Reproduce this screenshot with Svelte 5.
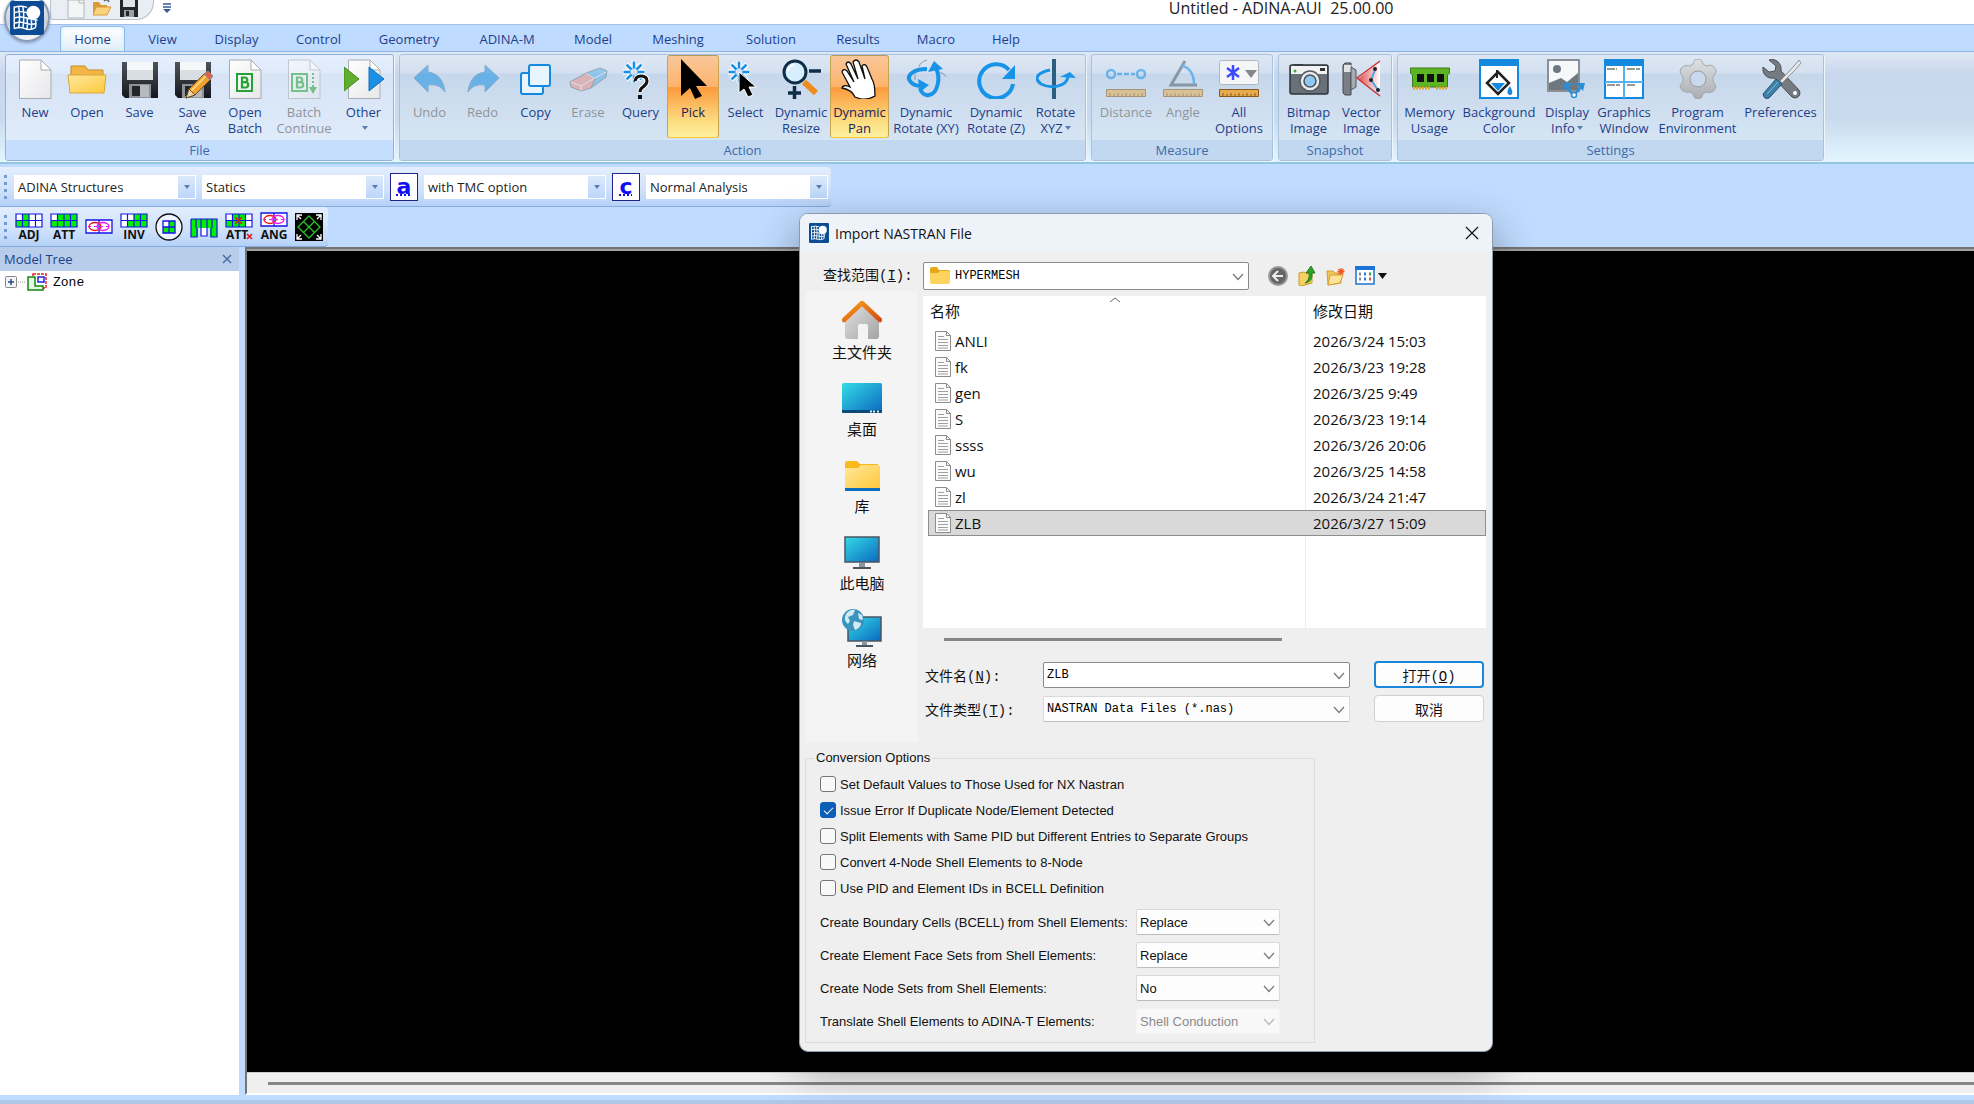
<script>
  const tabs = [
    { name: 'Home', w: 65 },
    { name: 'View', w: 59 },
    { name: 'Display', w: 73 },
    { name: 'Control', w: 75 },
    { name: 'Geometry', w: 90 },
    { name: 'ADINA-M', w: 90 },
    { name: 'Model', w: 66 },
    { name: 'Meshing', w: 88 },
    { name: 'Solution', w: 82 },
    { name: 'Results', w: 76 },
    { name: 'Macro', w: 64 },
    { name: 'Help', w: 60 }
  ];

  const groups = [
    {
      title: 'File',
      hot: true,
      items: [
        { icon: 'new', lines: ['New'], w: 52 },
        { icon: 'open', lines: ['Open'], w: 52 },
        { icon: 'save', lines: ['Save'], w: 53 },
        { icon: 'saveas', lines: ['Save', 'As'], w: 53 },
        { icon: 'openbatch', lines: ['Open', 'Batch'], w: 52 },
        { icon: 'batch', lines: ['Batch', 'Continue'], w: 66, disabled: true },
        { icon: 'other', lines: ['Other', ''], w: 53, menu: true }
      ]
    },
    {
      title: 'Action',
      items: [
        { icon: 'undo', lines: ['Undo'], w: 53, disabled: true },
        { icon: 'redo', lines: ['Redo'], w: 53, disabled: true },
        { icon: 'copy', lines: ['Copy'], w: 53 },
        { icon: 'erase', lines: ['Erase'], w: 52, disabled: true },
        { icon: 'query', lines: ['Query'], w: 53 },
        { icon: 'pick', lines: ['Pick'], w: 52, on: true },
        { icon: 'select', lines: ['Select'], w: 53 },
        { icon: 'resize', lines: ['Dynamic', 'Resize'], w: 58 },
        { icon: 'pan', lines: ['Dynamic', 'Pan'], w: 59, on: true },
        { icon: 'rotxy', lines: ['Dynamic', 'Rotate (XY)'], w: 74 },
        { icon: 'rotz', lines: ['Dynamic', 'Rotate (Z)'], w: 66 },
        { icon: 'rotxyz', lines: ['Rotate', 'XYZ'], w: 53, menu: true }
      ]
    },
    {
      title: 'Measure',
      items: [
        { icon: 'distance', lines: ['Distance'], w: 62, disabled: true },
        { icon: 'angle', lines: ['Angle'], w: 52, disabled: true },
        { icon: 'options', lines: ['All', 'Options'], w: 60 }
      ]
    },
    {
      title: 'Snapshot',
      items: [
        { icon: 'bitmap', lines: ['Bitmap', 'Image'], w: 53 },
        { icon: 'vector', lines: ['Vector', 'Image'], w: 53 }
      ]
    },
    {
      title: 'Settings',
      items: [
        { icon: 'memory', lines: ['Memory', 'Usage'], w: 57 },
        { icon: 'background', lines: ['Background', 'Color'], w: 82 },
        { icon: 'display', lines: ['Display', 'Info'], w: 54, menu: true },
        { icon: 'graphics', lines: ['Graphics', 'Window'], w: 60 },
        { icon: 'program', lines: ['Program', 'Environment'], w: 87 },
        { icon: 'prefs', lines: ['Preferences'], w: 79 }
      ]
    }
  ];

  const modules = [
    { value: 'ADINA Structures', label: 'Module' },
    { value: 'Statics', label: 'Analysis type', letter: 'a' },
    { value: 'with TMC option', label: 'Coupling', letter: 'c' },
    { value: 'Normal Analysis', label: 'Analysis mode' }
  ];

  const tools = ['ADJ', 'ATT', 'eye', 'INV', 'circle', 'comb', 'ATTx', 'ANG', 'fit'];

  const places = [
    { id: 'home', name: '主文件夹' },
    { id: 'desktop', name: '桌面' },
    { id: 'library', name: '库' },
    { id: 'pc', name: '此电脑' },
    { id: 'network', name: '网络' }
  ];

  const files = [
    { name: 'ANLI', date: '2026/3/24 15:03' },
    { name: 'fk', date: '2026/3/23 19:28' },
    { name: 'gen', date: '2026/3/25 9:49' },
    { name: 'S', date: '2026/3/23 19:14' },
    { name: 'ssss', date: '2026/3/26 20:06' },
    { name: 'wu', date: '2026/3/25 14:58' },
    { name: 'zl', date: '2026/3/24 21:47' },
    { name: 'ZLB', date: '2026/3/27 15:09' }
  ];

  let selected = $state('ZLB');

  let checks = $state([
    { label: 'Set Default Values to Those Used for NX Nastran', on: false },
    { label: 'Issue Error If Duplicate Node/Element Detected', on: true },
    { label: 'Split Elements with Same PID but Different Entries to Separate Groups', on: false },
    { label: 'Convert 4-Node Shell Elements to 8-Node', on: false },
    { label: 'Use PID and Element IDs in BCELL Definition', on: false }
  ]);

  const choices = [
    { label: 'Create Boundary Cells (BCELL) from Shell Elements:', value: 'Replace' },
    { label: 'Create Element Face Sets from Shell Elements:', value: 'Replace' },
    { label: 'Create Node Sets from Shell Elements:', value: 'No' },
    { label: 'Translate Shell Elements to ADINA-T Elements:', value: 'Shell Conduction', disabled: true }
  ];

  const rays = [0, 45, 90, 135, 180, 225, 270, 315];
</script>

{#snippet logo()}
  <rect width="32" height="32" rx="2" fill="#0c4c94" />
  <path d="M4 6Q10 4 16 6M4 11Q10 9 16 11M4 16Q10 14 16 16T26 18M4 21Q10 19 15 21T25 21M4 26Q9 24 14 26T24 25M4 5v21M8 5q2 10 0 21M12 5q2 10 0 21M16 16q1 6 0 10M20 18q1 4 0 8M24 18q1 4 0 7" fill="none" stroke="#fff" stroke-width="1.4" />
  <circle cx="22" cy="11" r="6.5" fill="#fff" />
{/snippet}

{#snippet page()}
  <path d="M4.5 1h21.500l10 10v28.500h-31.500z" fill="url(#paper)" stroke="#a9abb0" />
  <path d="M26 1v10h10z" fill="#fff" stroke="#a9abb0" />
{/snippet}

{#snippet floppy()}
  <path d="M2 3h36v36H5l-3-3z" fill="url(#disk)" />
  <path d="M7 3h26v18H7z" fill="#d8dee2" />
  <path d="M7 3h26v8H7z" fill="#f5f7f8" />
  <path d="M9 25h22v14H9z" fill="#8d9298" />
  <path d="M12 27h8v10h-8z" fill="#23262d" />
  <path d="M20 26h9v12h-9z" fill="#b5babe" />
{/snippet}

{#snippet folder()}
  <path d="M4 7h14l3 4h15v10H4z" fill="#f2b546" stroke="#c98a22" />
  <path d="M1 16h38l-2 18H3z" fill="url(#gold)" stroke="#dba536" />
{/snippet}

{#snippet burst()}
  {#each rays as r}
    <path d="M13 9V2" transform="rotate({r} 13 13)" stroke="#fff" stroke-width="5" />
  {/each}
  {#each rays as r}
    <path d="M13 9.500V2.500" transform="rotate({r} 13 13)" stroke="#1a8fe6" stroke-width="2.600" />
  {/each}
{/snippet}

{#snippet ruler()}
  <path d="M.5 30.500h39v7H.5z" fill="#e5ab4e" stroke="#8a5a1c" />
  <path d="M4 34v3M8 35v2M12 34v3M16 35v2M20 34v3M24 35v2M28 34v3M32 35v2M36 34v3" stroke="#8a5a1c" />
{/snippet}

{#snippet ribbonIcon(name)}
  <svg class="big" viewBox="0 0 40 40" fill="none" aria-hidden="true">
    {#if name === 'new'}
      {@render page()}
    {:else if name === 'open'}
      {@render folder()}
    {:else if name === 'save'}
      {@render floppy()}
    {:else if name === 'saveas'}
      {@render floppy()}
      <path d="M13 39l3-9 16-16 6 6-16 16z" fill="#f0a02c" stroke="#6d4a1a" />
      <path d="M18 32l15-15" stroke="#ffd078" stroke-width="2" />
      <path d="M13 39l3-9 6 6z" fill="#e9d3ae" stroke="#6d4a1a" />
      <path d="M31 15l4-3 5 5-3 4z" fill="#e0604a" stroke="#8a8f95" />
    {:else if name === 'openbatch' || name === 'batch'}
      {@render page()}
      <g transform={name === 'batch' ? 'translate(-4 0)' : ''} stroke="#24a334">
        <path d="M12 15h15v17H12z" stroke-width="2" />
        <path d="M17 18.500v10h3.500a2.700 2.700 0 0 0 0-5.400H17h3a2.300 2.300 0 0 0 0-4.600z" stroke-width="2.200" />
      </g>
      {#if name === 'batch'}
        <path d="M29 14v14" stroke="#24a334" stroke-width="2" stroke-dasharray="2 2" />
        <path d="M25 28h8l-4 7z" fill="#24a334" />
      {/if}
    {:else if name === 'other'}
      {@render page()}
      <path d="M0 8l15 12L0 32z" fill="#5fae2e" stroke="#3f8a1c" />
      <path d="M25 8l15 12-15 12z" fill="#1c90e6" stroke="#1470bb" />
    {:else if name === 'undo' || name === 'redo'}
      <g transform={name === 'redo' ? 'translate(40 0) scale(-1 1)' : ''}>
        <path d="M4 19L18 6v7c10 1 16 9 17 20-4-6-9-8-17-7v7z" fill="#1b93e2" stroke="#4b86b8" />
      </g>
    {:else if name === 'copy'}
      <rect x="5" y="14" width="22" height="21" rx="2" fill="#e8f5fe" stroke="#1389e0" stroke-width="2" />
      <rect x="13" y="6" width="21" height="21" rx="2" fill="#e8f5fe" stroke="#1389e0" stroke-width="2" />
    {:else if name === 'erase'}
      <path d="M18 14l14-5 7 3-1 6-15 11z" fill="#5fb4ea" stroke="#66747f" />
      <path d="M2 23l16-9 9 6-4 9-10 3-10-4z" fill="#e8948c" stroke="#66747f" />
      <path d="M3 23l10 4v5M13 27l12-7 13-7M18 14l8 5" stroke="#f7e4e0" />
    {:else if name === 'query'}
      {@render burst()}
      <path d="M14 22q1-5 6-5 6 0 6 5 0 3-4 6-3 2-3 5" stroke="#fff" stroke-width="5" />
      <path d="M14 22q1-5 6-5 6 0 6 5 0 3-4 6-3 2-3 5" stroke="#111" stroke-width="3" />
      <rect x="17" y="36" width="4" height="4" fill="#111" />
    {:else if name === 'pick'}
      <path d="M8 0v37l9-8 5 11 7-3-6-10h11z" fill="#000" />
    {:else if name === 'select'}
      {@render burst()}
      <path d="M13 13v21l5-4 4 8 5-2-4-8h7z" fill="#000" stroke="#fff" />
    {:else if name === 'resize'}
      <circle cx="14" cy="13" r="11" fill="#d7effc" stroke="#0e2e48" stroke-width="3" />
      <path d="M7 12a7 7 0 0 1 6-6" stroke="#fff" stroke-width="2" />
      <path d="M23 23l12 11" stroke="#f08c1b" stroke-width="6" />
      <path d="M28 12h12M7 34h13M13.500 27v13" stroke="#0e2e48" stroke-width="3.500" />
    {:else if name === 'pan'}
      <path d="M15 38Q12 31 2 29q1-4 8-1L2 13q1-4 5-1l7 11L6 5q2-4 5 0l7 15-5-17q3-4 6 0l6 17-3-13q3-3 5 1l5 12q3 5 3 17-7 4-14 3z" fill="#fff" stroke="#111" stroke-width="1.300" />
    {:else if name === 'rotxy'}
      <path d="M29 7c7 12 2 28-6 29-5 1-8-3-9-7" stroke="#1793e8" stroke-width="4" />
      <path d="M21 10c-13 0-21 6-17 12 2 3 6 5 11 5" stroke="#1793e8" stroke-width="4" />
      <path d="M22 13l6-11 9 8z" fill="#1793e8" />
      <path d="M12 20l11 6-9 7z" fill="#1793e8" />
      <path d="M21 1q-7 2-8 7M34 13q5 2 6 5M9 15v6" stroke="#8a99a8" />
    {:else if name === 'rotz'}
      <path d="M33 11A17 17 0 1 0 37 25" stroke="#1793e8" stroke-width="4" />
      <path d="M39 6v14H26z" fill="#1793e8" />
    {:else if name === 'rotxyz'}
      <path d="M18 0v40" stroke="#2d5e80" stroke-width="4" />
      <path d="M14 11C0 14-2 20 5 25c10 5 25 3 27-7" stroke="#1793e8" stroke-width="3" />
      <path d="M24 18l10-5 6 6z" fill="#1793e8" />
    {:else if name === 'distance'}
      <path d="M11 15h18" stroke="#1793e8" stroke-width="2.500" stroke-dasharray="5 2" />
      <circle cx="5" cy="15" r="4" stroke="#1793e8" stroke-width="2.500" />
      <circle cx="35" cy="15" r="4" stroke="#1793e8" stroke-width="2.500" />
      {@render ruler()}
    {:else if name === 'angle'}
      <path d="M22 2L8 26h26" stroke="#55606b" stroke-width="3" />
      <path d="M19 7c7 1 12 8 12 18" stroke="#1793e8" stroke-width="2.500" />
      {@render ruler()}
    {:else if name === 'options'}
      <rect x=".5" y="1.500" width="39" height="24" rx="2" fill="#f5f6f8" stroke="#b3b6bb" />
      <path d="M14 6v15M8 9l12 9M20 9L8 18" stroke="#3d4bff" stroke-width="2.500" />
      <path d="M26 11h12l-6 8z" fill="#85898f" />
      {@render ruler()}
    {:else if name === 'bitmap'}
      <path d="M5 5h9v3H5z" fill="#50555c" />
      <rect x="1" y="6" width="38" height="29" rx="2" fill="#6a7078" stroke="#2e3338" stroke-width="1.500" />
      <path d="M2 7h36v8H2z" fill="#f1f2f3" />
      <rect x="31" y="9" width="5" height="3" fill="#333" />
      <circle cx="6" cy="12" r="1.500" fill="#3bb13b" />
      <circle cx="21" cy="22" r="10" fill="#e9ebed" stroke="#565c63" stroke-width="1.500" />
      <circle cx="21" cy="22" r="6" fill="#8cc8f2" stroke="#4b5259" stroke-width="1.500" />
    {:else if name === 'vector'}
      <path d="M16 20L38 3v31z" fill="url(#beam)" />
      <path d="M38 2L15 19l23 18" stroke="#cf3536" stroke-width="1.500" />
      <path d="M33 11l-4 10 7 10" stroke="#4aa5e6" stroke-width="2" />
      <circle cx="33" cy="10" r="2" fill="#222" /><circle cx="29" cy="21" r="2" fill="#222" /><circle cx="36" cy="31" r="2" fill="#222" />
      <path d="M1 6l2-2h6v32H3l-2-2z" fill="#7a7f86" stroke="#44494f" />
      <path d="M2 6h7v7H2z" fill="#e1e3e5" />
      <path d="M9 8l5 3v17l-5 3z" fill="#a5abb0" stroke="#55595e" />
    {:else if name === 'memory'}
      <path d="M.5 9h39v5l-2 2v12h-35V16l-2-2z" fill="#5cb423" stroke="#3c7c17" />
      <path d="M7 15h7v8H7zM17 15h7v8h-7zM27 15h7v8h-7z" fill="#111" />
      <path d="M3 29h18M26 29h11" stroke="#e2a528" stroke-width="3" stroke-dasharray="2 1" />
    {:else if name === 'background'}
      <path d="M1 1h38v38H1z" fill="#fff" stroke="#1389e0" stroke-width="2" />
      <path d="M0 0h40v7H0z" fill="#1389e0" />
      <path d="M19 13l11 11-11 11L8 24z" fill="#fff" stroke="#222" stroke-width="2.500" />
      <path d="M12 24h14l-7 8z" fill="#1389e0" />
      <path d="M18 11v8" stroke="#222" stroke-width="2" />
      <path d="M31 27q-4 6-2 8t4 0q1-3-2-8z" fill="#1389e0" />
    {:else if name === 'display'}
      <path d="M1 1h31v31H1z" fill="#f7f8f9" stroke="#8b9096" stroke-width="2" />
      <circle cx="10" cy="10" r="4" fill="#6f7780" />
      <path d="M2 24l12-5 6 4 11-9v17H2z" fill="#6f7780" />
      <path d="M26 36l-7-9M27 36l8-9" stroke="#2a8fd6" stroke-width="2.500" />
      <path d="M16 24h10l-8 8zM38 24H28l8 8z" fill="#2a8fd6" />
      <circle cx="27" cy="36" r="2.500" fill="#fff" stroke="#2a8fd6" stroke-width="1.500" />
    {:else if name === 'graphics'}
      <path d="M1 1h38v38H1z" fill="#fff" stroke="#1389e0" stroke-width="2" />
      <path d="M0 0h40v7H0z" fill="#1389e0" />
      <path d="M20 7v32M1 23h38" stroke="#55b1f0" stroke-width="2" />
      <path d="M3 10h10M23 10h13M3 26h13M23 26h8" stroke="#333" stroke-dasharray="8 1" />
    {:else if name === 'program'}
      <path d="M15 5q1-5 5-5t5 5l3 2q5-2 7 0 4 4 3 6l-3 5v4l3 5q-1 5-4 6-3 1-6 0l-3 2q-1 5-5 5t-5-5l-3-2q-4 1-7-1-3-3-3-5l3-5v-4l-3-5q0-4 4-6 3-1 6 0z" fill="url(#steel)" stroke="#a4a8ac" />
      <circle cx="20" cy="20" r="8" fill="#c9d8ed" stroke="#999da2" />
    {:else if name === 'prefs'}
      <path d="M8 1c7-2 13 3 12 11l18 19c3 5-2 10-7 7L13 19C6 20 1 15 2 8l6 5 6-1 1-5z" fill="#767b81" stroke="#4a4e53" />
      <circle cx="34" cy="34" r="2" fill="#fff" />
      <path d="M19 22L33 7l5-6 2 3-5 6-14 14z" fill="#e4e6e8" stroke="#8f9398" />
      <path d="M2 35L15 20l6 5L8 39q-5 2-6-4z" fill="#3d7fa8" stroke="#25546f" />
      <path d="M6 35l11-12" stroke="#8cc0dd" />
    {/if}
  </svg>
{/snippet}

{#snippet cells(filled)}
  <path d="M1 1h26v13H1z" fill="#fff" />
  {#each filled as [x, y]}
    <rect x={1 + x * 6.5} y={1 + y * 6.5} width="6.500" height="6.500" fill="#00f000" />
  {/each}
  <path d="M1 1h26v13H1zM1 7.500h26M7.500 1v13M14 1v13M20.500 1v13" fill="none" stroke="#1414e6" stroke-width="1.200" />
{/snippet}

{#snippet eye(y)}
  <g transform="translate(0 {y})" fill="none">
    <path d="M1 1h26v13H1zM14 1v13" fill="#fff" stroke="#1414e6" stroke-width="1.300" />
    <ellipse cx="10" cy="7.500" rx="6" ry="4" stroke="#f01414" stroke-width="1.300" />
    <ellipse cx="18" cy="7.500" rx="6" ry="4" stroke="#f014f0" stroke-width="1.300" />
    <path d="M3 7.500h22" stroke="#f014f0" stroke-dasharray="3 3" />
  </g>
{/snippet}

{#snippet toolIcon(name)}
  <svg class="tool-icon" viewBox="0 0 28 28" fill="none" aria-hidden="true">
    {#if name === 'ADJ'}
      {@render cells([[0, 1], [1, 0], [1, 1]])}
      <text x="14" y="26">ADJ</text>
    {:else if name === 'ATT'}
      {@render cells([[0, 1], [1, 0], [1, 1], [2, 0], [2, 1], [3, 0], [3, 1]])}
      <text x="14" y="26">ATT</text>
    {:else if name === 'eye'}
      {@render eye(6)}
    {:else if name === 'INV'}
      {@render cells([[1, 1], [2, 0], [2, 1], [3, 0], [3, 1]])}
      <text x="14" y="26">INV</text>
    {:else if name === 'circle'}
      <circle cx="14" cy="14" r="13" fill="#eef4ff" stroke="#111" stroke-width="1.300" />
      <path d="M8 8h12v12H8z" fill="#00f000" />
      <path d="M8 8h6v6H8z" fill="#fff" />
      <path d="M8 8h12v12H8zM14 8v12M8 14h12" stroke="#1414e6" stroke-width="1.300" />
    {:else if name === 'comb'}
      <path d="M1 6h26v18h-7v-9H8v9H1z" fill="#00f000" />
      <path d="M11 15h6v8h-6z" fill="#fff" />
      <path d="M1 6h26v18h-6V15M1 6v18h6V15M6 6v9M11 6v17h6V6M22 6v9" stroke="#1414e6" stroke-width="1.200" />
    {:else if name === 'ATTx'}
      {@render cells([[0, 1], [1, 0], [1, 1], [2, 0], [2, 1]])}
      <path d="M10 4l7 7M17 4l-7 7" stroke="#f01414" stroke-width="1.500" />
      <text x="12" y="26">ATT</text>
      <path d="M22 21l5 5M27 21l-5 5" stroke="#f01414" stroke-width="1.500" />
    {:else if name === 'ANG'}
      {@render eye(-1)}
      <text x="14" y="26">ANG</text>
    {:else}
      <path d="M0 0h28v28H0z" fill="#000" />
      <path d="M2 7V2h5M2 2l4 4M26 7V2h-5M26 2l-4 4M2 21v5h5M2 26l4-4M26 21v5h-5M26 26l-4-4" stroke="#fff" stroke-width="1.300" />
      <path d="M14 3l11 11-11 11L3 14zM8.500 8.500l11 11M19.500 8.500l-11 11" stroke="#2ec22e" stroke-width="1.300" />
    {/if}
  </svg>
{/snippet}

{#snippet chevron()}
  <svg class="chevron" viewBox="0 0 12 8" width="12" height="8" aria-hidden="true"><path d="M1 1l5 5.500L11 1" fill="none" stroke="#777" stroke-width="1.200" /></svg>
{/snippet}

{#snippet placeIcon(id)}
  <svg viewBox="0 0 40 40" width="40" height="40" fill="none" aria-hidden="true">
    {#if id === 'home'}
      <path d="M3 17L20 3l17 14v19q0 3-3 3h-8V26q0-2-2-2h-6q-2 0-2 2v13H6q-3 0-3-3z" fill="url(#wall)" />
      <path d="M2 20L20 3l18 17" stroke="url(#roof)" stroke-width="4.500" stroke-linecap="round" stroke-linejoin="round" />
    {:else if id === 'desktop'}
      <rect y="6" width="40" height="30" rx="1.500" fill="url(#screen)" />
      <path d="M0 33h40v1.500q0 1.500-1.500 1.500h-37Q0 36 0 34.500z" fill="#0b4a78" />
      <path d="M28 34.500h2M31 34.500h2M35 34.500h2" stroke="#d6ecfa" stroke-width="2" />
    {:else if id === 'library'}
      <path d="M3 32V9q0-2 2-2h10l3 3h18v22z" fill="#fbb91c" />
      <path d="M3 14h13l3-3h17q2 0 2 2v21H3z" fill="url(#gold)" />
      <path d="M3 34h35v3H3z" fill="#0b6cc0" />
    {:else if id === 'pc'}
      <rect x="3" y="6" width="34" height="25" fill="url(#screen)" stroke="#4a5560" stroke-width="1.500" />
      <path d="M17 32h6v4h-6z" fill="#8a949e" />
      <path d="M11 36h18v2H11z" fill="#4a5560" />
    {:else}
      <rect x="6" y="9" width="33" height="24" fill="url(#screen)" stroke="#4a5560" stroke-width="1.500" />
      <path d="M20 33h5v4h-5z" fill="#8a949e" />
      <path d="M14 37h17v2H14z" fill="#4a5560" />
      <circle cx="11" cy="12" r="11" fill="#3c93bd" />
      <path d="M4 6q4-5 9-4l-2 5-5 2 2 4-2 3Q1 12 4 6zM12 13l7 2q0 5-6 7l-2-5zM16 5l4 2 1 5-4-1z" fill="#cfeaf5" />
    {/if}
  </svg>
{/snippet}

<svg class="defs" width="0" height="0" aria-hidden="true">
  <defs>
    <linearGradient id="paper" x1="0" y1="0" x2="1" y2="1"><stop offset="0" stop-color="#fff" /><stop offset="1" stop-color="#e6e7e9" /></linearGradient>
    <linearGradient id="disk" x1="0" y1="0" x2="0" y2="1"><stop offset="0" stop-color="#4e525a" /><stop offset="1" stop-color="#15171d" /></linearGradient>
    <linearGradient id="gold" x1="0" y1="0" x2="1" y2="1"><stop offset="0" stop-color="#ffe79c" /><stop offset="1" stop-color="#fdc93c" /></linearGradient>
    <linearGradient id="beam" x1="0" y1="0" x2="1" y2="0"><stop offset="0" stop-color="#e04a4a" /><stop offset="1" stop-color="#fff" /></linearGradient>
    <linearGradient id="steel" x1="0" y1="0" x2="0" y2="1"><stop offset="0" stop-color="#dfe1e3" /><stop offset="1" stop-color="#a9acb0" /></linearGradient>
    <linearGradient id="screen" x1="0" y1="0" x2="1" y2="1"><stop offset="0" stop-color="#35dbe6" /><stop offset="1" stop-color="#0a68c0" /></linearGradient>
    <linearGradient id="wall" x1="0" y1="0" x2="1" y2="1"><stop offset="0" stop-color="#e3e3e3" /><stop offset="1" stop-color="#a4a4a4" /></linearGradient>
    <linearGradient id="roof" x1="0" y1="0" x2="1" y2="1"><stop offset="0" stop-color="#f7a01e" /><stop offset="1" stop-color="#d64a10" /></linearGradient>
  </defs>
</svg>

<div class="app">
  <header class="titlebar">
    <div class="quick">
      <button aria-label="New"><svg viewBox="0 0 20 20" width="20" height="20"><path d="M3 0h16v18H3z" fill="#f4f5f6" stroke="#b3b6ba" /><path d="M14 0v3h5" fill="none" stroke="#b3b6ba" /></svg></button>
      <button aria-label="Open"><svg viewBox="0 0 20 20" width="20" height="20"><path d="M1 2h6l2 3h6v8H1z" fill="#d99b3a" /><path d="M4 7h15l-4 8H1z" fill="#fcd37c" stroke="#d99b3a" /><path d="M12 1q3-3 5 1" fill="none" stroke="#567" stroke-width="1.500" /></svg></button>
      <button aria-label="Save"><svg viewBox="0 0 20 20" width="20" height="20"><path d="M1 0h18v17H1z" fill="#23262d" /><path d="M4 0h12v7H4z" fill="#dfe4e8" /><path d="M5 10h10v7H5z" fill="#9ba1a6" /><path d="M7 11h3v5H7z" fill="#23262d" /></svg></button>
    </div>
    <button class="more" aria-label="Customize"><svg viewBox="0 0 10 12" width="10" height="12"><path d="M1 2h8M1 5h8" stroke="#3a5a94" stroke-width="1.500" /><path d="M1 7h8l-4 4z" fill="#3a5a94" /></svg></button>
    <h1>Untitled - ADINA-AUI&nbsp; 25.00.00</h1>
  </header>
  <button class="orb" aria-label="Application menu"><svg viewBox="0 0 32 32" width="34" height="34">{@render logo()}</svg></button>

  <nav class="tabs">
    {#each tabs as tab, i}
      <button class="tab" class:active={i === 0} style="width: {tab.w}px">{tab.name}</button>
    {/each}
  </nav>

  <div class="ribbon">
    {#each groups as group}
      <section class="group" class:hot={group.hot}>
        <div class="items">
          {#each group.items as item}
            <button class="item" class:on={item.on} disabled={item.disabled} style="width: {item.w}px">
              {@render ribbonIcon(item.icon)}
              {#each item.lines as line, i}
                <span class="line">{line}{#if item.menu && i === 1}<i class="arrow"></i>{/if}</span>
              {/each}
            </button>
          {/each}
        </div>
        <h2>{group.title}</h2>
      </section>
    {/each}
  </div>

  <div class="toolbar combos">
    <span class="grip"></span>
    {#each modules as m}
      <span class="combo">
        <select aria-label={m.label}><option>{m.value}</option></select>
        <span class="drop"><i class="arrow"></i></span>
      </span>
      {#if m.letter}
        <button class="letter">{m.letter}</button>
      {/if}
    {/each}
  </div>

  <div class="toolbar tools">
    <span class="grip"></span>
    {#each tools as tool}
      <button class="tool" aria-label={tool}>{@render toolIcon(tool)}</button>
    {/each}
  </div>

  <main>
    <aside class="tree">
      <div class="tree-head">
        <span>Model Tree</span>
        <button aria-label="Close panel"><svg viewBox="0 0 10 10" width="10" height="10"><path d="M1 1l8 8M9 1L1 9" stroke="#4a6da8" stroke-width="1.500" /></svg></button>
      </div>
      <div class="node">
        <svg viewBox="0 0 20 12" width="20" height="12"><rect x=".5" y=".5" width="11" height="11" rx="1" fill="#f2f4f8" stroke="#888" /><path d="M3 6h6M6 3v6" stroke="#274b8f" stroke-width="1.500" /><path d="M13 6h7" stroke="#999" stroke-dasharray="1 1" /></svg>
        <svg viewBox="0 0 20 18" width="20" height="18" fill="none"><path d="M6 1h13v14H6z" stroke="#e62020" stroke-width="1.500" stroke-dasharray="3 1" /><path d="M1 4h7v9h8v4H1z" fill="#e7f6e7" stroke="#118811" stroke-width="1.500" /><path d="M11 4h6v5h-6z" fill="#fff" stroke="#2020e6" stroke-width="1.500" /></svg>
        <span>Zone</span>
      </div>
    </aside>
    <div class="view">
      <div class="canvas"></div>
      <div class="hscroll"><span></span></div>
    </div>
  </main>
  <footer></footer>

  <div class="dialog" role="dialog" aria-labelledby="dlg-title">
    <div class="dlg-head">
      <svg viewBox="0 0 32 32" width="20" height="20" aria-hidden="true">{@render logo()}</svg>
      <h3 id="dlg-title">Import NASTRAN File</h3>
      <button class="close" aria-label="Close"><svg viewBox="0 0 14 14" width="14" height="14"><path d="M1 1l12 12M13 1L1 13" stroke="#111" stroke-width="1.200" /></svg></button>
    </div>

    <div class="lookin">
      <label for="lookin">查找范围(<u>I</u>):</label>
      <span class="field dark">
        <svg class="folder" viewBox="0 0 20 18" width="20" height="18" aria-hidden="true"><path d="M0 15V2q0-2 2-2h5l2 3h9q2 0 2 2v10z" fill="#e8a81c" /><path d="M0 6h8l2-2h8q2 0 2 2v9q0 2-2 2H2q-2 0-2-2z" fill="#fdd25f" /></svg>
        <select id="lookin" class="with-icon"><option>HYPERMESH</option></select>
        {@render chevron()}
      </span>
      <div class="nav">
        <button aria-label="Back"><svg viewBox="0 0 20 20" width="20" height="20"><circle cx="10" cy="10" r="9" fill="#666" stroke="#999" stroke-width="2" /><path d="M15 10H6M10 5l-5 5 5 5" fill="none" stroke="#eee" stroke-width="2" /></svg></button>
        <button aria-label="Up"><svg viewBox="0 0 20 20" width="20" height="20"><path d="M2 7l5-1 2 1h6v10l-11 3-2-1z" fill="#f7d061" stroke="#c9992c" /><path d="M8 17q5-3 4-10H9l5-7 4 7h-3q1 9-7 10z" fill="#2aa52a" stroke="#157015" stroke-width=".8" /></svg></button>
        <button aria-label="New folder"><svg viewBox="0 0 20 20" width="20" height="20"><path d="M1 5h6l2 2h6v10L2 19z" fill="#f0c458" stroke="#cf9f35" /><path d="M4 9h13l-3 8-12 2z" fill="#fde39a" stroke="#cf9f35" /><path d="M15 2v7M11.500 5.500h7M12.500 3l5 5M17.500 3l-5 5" stroke="#f0582a" stroke-width="1.300" /></svg></button>
        <button class="views" aria-label="Views"><svg viewBox="0 0 32 20" width="32" height="20"><rect x="1" y="1" width="18" height="17" fill="#fff" stroke="#1a73d6" stroke-width="1.500" /><path d="M0 0h20v4H0z" fill="#1a73d6" /><path d="M4 8h2M4 13h2" stroke="#888" stroke-width="3" /><path d="M9 8h2M9 13h2" stroke="#2a7ad6" stroke-width="3" /><path d="M14 8h2" stroke="#3aa53a" stroke-width="3" /><path d="M14 13h2" stroke="#d6582a" stroke-width="3" /><path d="M23 7h9l-4.500 6z" fill="#111" /></svg></button>
      </div>
    </div>

    <div class="dlg-body">
      <div class="places">
        {#each places as place}
          <button class="place">
            {@render placeIcon(place.id)}
            <span>{place.name}</span>
          </button>
        {/each}
      </div>

      <div class="browser">
        <div class="list">
          <svg class="sort" viewBox="0 0 12 6" width="12" height="6" aria-hidden="true"><path d="M1 5l5-4 5 4" fill="none" stroke="#666" /></svg>
          <table>
            <thead>
              <tr><th class="name">名称</th><th>修改日期</th></tr>
            </thead>
            <tbody>
              {#each files as file}
                <tr class:selected={file.name === selected} onclick={() => (selected = file.name)}>
                  <td class="name">
                    <svg viewBox="0 0 16 20" width="16" height="20" aria-hidden="true"><path d="M.5.5h11l4 4v15H.5z" fill="#fbfbfb" stroke="#8d8d8d" /><path d="M11.500.5v4h4" fill="none" stroke="#8d8d8d" /><path d="M3 5.500h6M3 8.500h10M3 11.500h10M3 14.500h10M3 17h10" stroke="#a0a0a0" /></svg>
                    <span>{file.name}</span>
                  </td>
                  <td>{file.date}</td>
                </tr>
              {/each}
            </tbody>
          </table>
        </div>
        <div class="list-scroll"></div>

        <div class="form">
          <label for="fname">文件名(<u>N</u>):</label>
          <span class="field dark">
            <input id="fname" type="text" value={selected} />
            {@render chevron()}
          </span>
          <button class="btn primary">打开(<u>O</u>)</button>
          <label for="ftype">文件类型(<u>T</u>):</label>
          <span class="field">
            <select id="ftype"><option>NASTRAN Data Files (*.nas)</option></select>
            {@render chevron()}
          </span>
          <button class="btn">取消</button>
        </div>
      </div>
    </div>

    <fieldset>
      <legend>Conversion Options</legend>
      {#each checks as check}
        <label class="check"><input type="checkbox" bind:checked={check.on} />{check.label}</label>
      {/each}
      <div class="choices">
        {#each choices as choice, i}
          <label for="choice{i}">{choice.label}</label>
          <span class="field" class:off={choice.disabled}>
            <select id="choice{i}" disabled={choice.disabled}><option>{choice.value}</option></select>
            {@render chevron()}
          </span>
        {/each}
      </div>
    </fieldset>
  </div>
</div>

<style>
  :global(body) {
    background: #bfdbff;
  }

  * {
    box-sizing: border-box;
  }

  button {
    padding: 0;
    border: none;
    background: none;
    font: inherit;
    color: inherit;
  }

  select,
  input {
    font: inherit;
    color: inherit;
  }

  h1,
  h2,
  h3 {
    margin: 0;
    font-weight: 400;
  }

  .defs {
    position: absolute;
  }

  .app {
    position: relative;
    display: flex;
    flex-direction: column;
    min-height: 100vh;
    overflow: hidden;
    background: #bfdbff;
    font-family: 'Open Sans', 'Noto Sans', sans-serif;
    font-size: 13px;
    color: #1e3f8a;
  }

  .titlebar {
    display: flex;
    align-items: flex-start;
    height: 25px;
    background: #fff;
    border-bottom: 1px solid #9dbfe8;
  }

  .quick {
    display: flex;
    gap: 7px;
    height: 20px;
    margin-left: 50px;
    padding: 0 14px;
    background: #e9eef4;
    border: 1px solid #b9bfc8;
    border-top: none;
    border-radius: 0 0 18px 4px;
  }

  .more {
    margin-left: 8px;
  }

  h1 {
    margin-left: 50.5%;
    font-size: 16px;
    line-height: 16px;
    color: #222;
    white-space: nowrap;
  }

  .orb {
    position: absolute;
    z-index: 2;
    left: 4px;
    top: -6px;
    display: grid;
    place-items: center;
    width: 46px;
    height: 48px;
    border: 2px solid #8b9bb5;
    border-radius: 50%;
    background: linear-gradient(#f5f7fa, #c9cfd9 60%, #f5f8fc);
    box-shadow: 0 1px 3px #7f93b5;
  }

  .tabs {
    display: flex;
    gap: 8px;
    height: 26px;
    padding: 1px 0 0 60px;
  }

  .tab {
    flex: none;
    border: 1px solid transparent;
    border-bottom: none;
  }

  .tab.active {
    border-color: #8fb9e8;
    border-radius: 4px 4px 0 0;
    background: linear-gradient(#fff, #e3edf9);
    box-shadow: inset 0 0 4px #c7f0fb;
  }

  .ribbon {
    display: flex;
    gap: 5px;
    height: 113px;
    padding: 2px 5px 2px;
    border-top: 1px solid #8db2e3;
    border-bottom: 2px solid #93c4e0;
    background: linear-gradient(#dfe9f5, #c8d7ed 20%, #c9daee 60%, #e3f5ff);
  }

  .group {
    display: flex;
    flex: none;
    flex-direction: column;
    height: 107px;
    border: 1px solid #a8c2de;
    border-radius: 3px;
    background: linear-gradient(#dde7f4, #d4e0f0 17%, #c7d7eb 18%, #dae9f6);
    box-shadow: 1px 1px 0 #eef6fd;
  }

  .group.hot {
    background: linear-gradient(#e6effd, #deebfb 17%, #d7e4f6 18%, #e1edfb);
    border-color: #8fb4dc;
  }

  .items {
    display: flex;
    flex: 1;
    padding: 0 3px;
  }

  .item {
    display: flex;
    flex: none;
    flex-direction: column;
    align-items: center;
    height: 83px;
    padding-top: 3px;
    border: 1px solid transparent;
    border-radius: 3px;
    line-height: 16px;
    white-space: nowrap;
  }

  .item.on {
    border-color: #b49a62 #c8a452 #fdc42e;
    background: linear-gradient(#f9c79a, #fdb36c 38%, #fb9a3c 39%, #fde388 85%, #fdf0a0);
    color: #20205c;
  }

  .item:disabled {
    color: #8f9499;
  }

  .item:disabled .big {
    opacity: 0.55;
  }

  .big {
    flex: none;
    width: 40px;
    height: 40px;
    margin-bottom: 5px;
  }

  .line {
    display: flex;
    align-items: center;
    height: 16px;
  }

  .arrow {
    width: 0;
    margin-left: 2px;
    border: 3px solid transparent;
    border-top: 4px solid #5b7fb5;
    border-bottom: none;
  }

  h2 {
    height: 20px;
    border-radius: 0 0 2px 2px;
    background: #c1d8f0;
    font-size: 13px;
    line-height: 20px;
    text-align: center;
    color: #3e6aaa;
  }

  .hot h2 {
    background: #c5defe;
  }

  .toolbar {
    display: flex;
    align-items: center;
    align-self: flex-start;
    border-bottom: 1px solid #86abdc;
    border-radius: 0 4px 4px 0;
    background: linear-gradient(#e3eefe, #cfe1fb 60%, #b5d1f8);
  }

  .combos {
    gap: 6px;
    height: 40px;
    margin-top: 3px;
    padding: 0 3px 0 4px;
  }

  .tools {
    gap: 7px;
    height: 40px;
    padding: 0 5px 0 4px;
  }

  .grip {
    width: 3px;
    height: 24px;
    margin-right: 1px;
    background: repeating-linear-gradient(#6f9ad3 0 3px, transparent 3px 7px);
  }

  .combo {
    position: relative;
    width: 182px;
    height: 24px;
  }

  .combo select {
    width: 100%;
    height: 24px;
    padding: 0 20px 0 4px;
    border: none;
    background: #fff;
    color: #222;
    appearance: none;
  }

  .drop {
    position: absolute;
    top: 1px;
    right: 1px;
    display: grid;
    place-items: center;
    width: 17px;
    height: 22px;
    background: linear-gradient(#dce9fb, #bcd6fa);
    pointer-events: none;
  }

  .drop .arrow {
    margin: 0;
  }

  .letter {
    width: 28px;
    height: 28px;
    border: 1px solid #23238e;
    background: #fff;
    font: bold 22px/20px 'DejaVu Sans', sans-serif;
    color: #1010f0;
    text-decoration: underline dotted 2px;
  }

  .tool,
  .tool-icon {
    display: block;
    width: 28px;
    height: 28px;
    overflow: visible;
  }

  .tool-icon text {
    font: bold 12px 'Open Sans', sans-serif;
    fill: #111;
    text-anchor: middle;
  }

  main {
    display: flex;
    flex: 1;
    gap: 6px;
  }

  .tree {
    width: 239px;
    background: #fff;
  }

  .tree-head {
    display: flex;
    align-items: center;
    justify-content: space-between;
    height: 24px;
    padding: 0 7px 0 4px;
    background: #b7cde9;
  }

  .node {
    display: flex;
    align-items: center;
    gap: 2px;
    padding: 2px 5px;
    font: 13px 'Liberation Mono', monospace;
    color: #000;
  }

  .node span {
    margin-left: 4px;
  }

  .view {
    display: flex;
    flex: 1;
    flex-direction: column;
    border: 2px solid #757575;
    border-right: none;
    border-bottom: 2px solid #fff;
  }

  .canvas {
    flex: 1;
    background: #000;
    border-top: 2px solid #a0a0a0;
  }

  .hscroll {
    height: 21px;
    padding: 9px 0 0 21px;
    border-top: 1px solid #ccc;
    background: #efefef;
  }

  .hscroll span {
    display: block;
    height: 3px;
    background: #868686;
  }

  footer {
    height: 9px;
    border-top: 5px solid #bfdbff;
    background: #b0c8e6;
  }

  /* import dialog */
  .dialog {
    position: absolute;
    left: 799px;
    top: 213px;
    width: 694px;
    padding-bottom: 8px;
    overflow: hidden;
    border: 1px solid #8c9aae;
    border-radius: 9px;
    background: #efefef;
    color: #111;
    box-shadow: 0 16px 44px rgba(0, 0, 0, 0.38);
  }

  .dlg-head {
    display: flex;
    align-items: center;
    height: 38px;
    padding: 0 13px 0 9px;
    background: #eef3fa;
  }

  h3 {
    flex: 1;
    margin-left: 6px;
    font-size: 14px;
  }

  .close svg {
    display: block;
  }

  .lookin {
    display: flex;
    align-items: center;
    padding: 10px 0 1px 23px;
    font: 14px 'Liberation Mono', 'Noto Sans CJK SC', monospace;
  }

  .lookin label {
    width: 100px;
    padding-bottom: 4px;
    white-space: nowrap;
  }

  .lookin .field {
    width: 326px;
    height: 28px;
  }

  .field {
    position: relative;
    display: block;
    height: 26px;
    border: 1px solid #d9d9d9;
    border-bottom-color: #bdbdbd;
    border-radius: 2px;
    background: #fdfdfd;
  }

  .field.dark {
    border-color: #8a8a8a;
    background: #fff;
  }

  .field select,
  .field input {
    display: block;
    width: 100%;
    height: 100%;
    padding: 0 24px 0 3px;
    border: none;
    background: none;
    appearance: none;
    outline: none;
  }

  .lookin .field,
  .form .field {
    font: 12px 'Liberation Mono', monospace;
    color: #000;
  }

  .field select.with-icon {
    padding-left: 31px;
  }

  .folder {
    position: absolute;
    left: 6px;
    top: 4px;
  }

  .chevron {
    position: absolute;
    right: 4px;
    top: 50%;
    margin-top: -3px;
    pointer-events: none;
  }

  .field.off {
    color: #8a8a8a;
    background: #f8f8f8;
    border-color: #f3f3f3;
  }

  .field.off select {
    opacity: 1;
  }

  .off .chevron {
    opacity: 0.5;
  }

  .nav {
    display: flex;
    gap: 9px;
    margin-left: 19px;
  }

  .nav svg {
    display: block;
  }

  .dlg-body {
    display: grid;
    grid-template-columns: 112px 1fr;
    gap: 5px;
    padding: 0 6px;
    font-family: 'Open Sans', 'Noto Sans CJK SC', sans-serif;
    font-size: 15px;
  }

  .places {
    display: flex;
    flex-direction: column;
    gap: 14px;
    padding: 9px 0 71px;
    background: #f4f4f4;
  }

  .place {
    display: flex;
    flex-direction: column;
    align-items: center;
    gap: 1px;
    height: 63px;
    line-height: 22px;
  }

  .place svg {
    flex: none;
  }

  .browser {
    padding-top: 5px;
  }

  .list {
    position: relative;
    height: 332px;
    padding-left: 5px;
    background: linear-gradient(90deg, #fff 382px, #e3eefa 382px 383px, #fff 383px);
  }

  .sort {
    position: absolute;
    left: 186px;
    top: 1px;
  }

  table {
    width: 100%;
    border-collapse: collapse;
    table-layout: fixed;
  }

  th {
    height: 32px;
    padding: 0 8px 4px;
    font-weight: 400;
    text-align: left;
  }

  th.name {
    width: 377px;
    padding-left: 2px;
  }

  td {
    height: 26px;
    padding: 0 8px;
    line-height: 24px;
  }

  td.name {
    display: flex;
    align-items: center;
    gap: 4px;
    padding: 0 7px;
  }

  tr.selected {
    background: #d9d9d9;
    outline: 1px solid #8e8e8e;
    outline-offset: -1px;
  }

  .list-scroll {
    width: 338px;
    height: 3px;
    margin: 10px 0 20px 21px;
    background: #868686;
  }

  .form {
    display: grid;
    grid-template-columns: 120px 307px 110px;
    align-items: center;
    row-gap: 7px;
  }

  .form label,
  .btn {
    font: 14px 'Liberation Mono', 'Noto Sans CJK SC', monospace;
    white-space: nowrap;
  }

  .form label {
    padding-left: 2px;
  }

  .btn {
    width: 110px;
    height: 27px;
    margin-left: 24px;
    border: 1px solid #d0d0d0;
    border-radius: 4px;
    background: #fdfdfd;
  }

  .btn.primary {
    border: 2px solid #1a86d9;
  }

  fieldset {
    width: 510px;
    margin: 8px 0 0 5px;
    padding: 5px 34px 8px 14px;
    border: 1px solid #dcdcdc;
    font-family: 'Liberation Sans', sans-serif;
    font-size: 13px;
  }

  legend {
    margin-left: -6px;
    padding: 0 2px;
    line-height: 16px;
  }

  .check {
    display: flex;
    align-items: center;
    gap: 4px;
    height: 26px;
    white-space: nowrap;
  }

  .check input {
    display: grid;
    place-items: center;
    width: 16px;
    height: 16px;
    margin: 0;
    border: 1px solid #777;
    border-radius: 3px;
    background: #f8f8f8;
    appearance: none;
  }

  .check input:checked {
    border-color: #0a5fb8;
    background: #0a5fb8;
  }

  .check input:checked::after {
    content: '';
    width: 8px;
    height: 4px;
    margin-bottom: 2px;
    border: solid #fff;
    border-width: 0 0 1px 1px;
    transform: rotate(-45deg);
  }

  .choices {
    display: grid;
    grid-template-columns: 1fr 144px;
    align-items: center;
    row-gap: 7px;
    margin-top: 8px;
    white-space: nowrap;
  }
</style>
